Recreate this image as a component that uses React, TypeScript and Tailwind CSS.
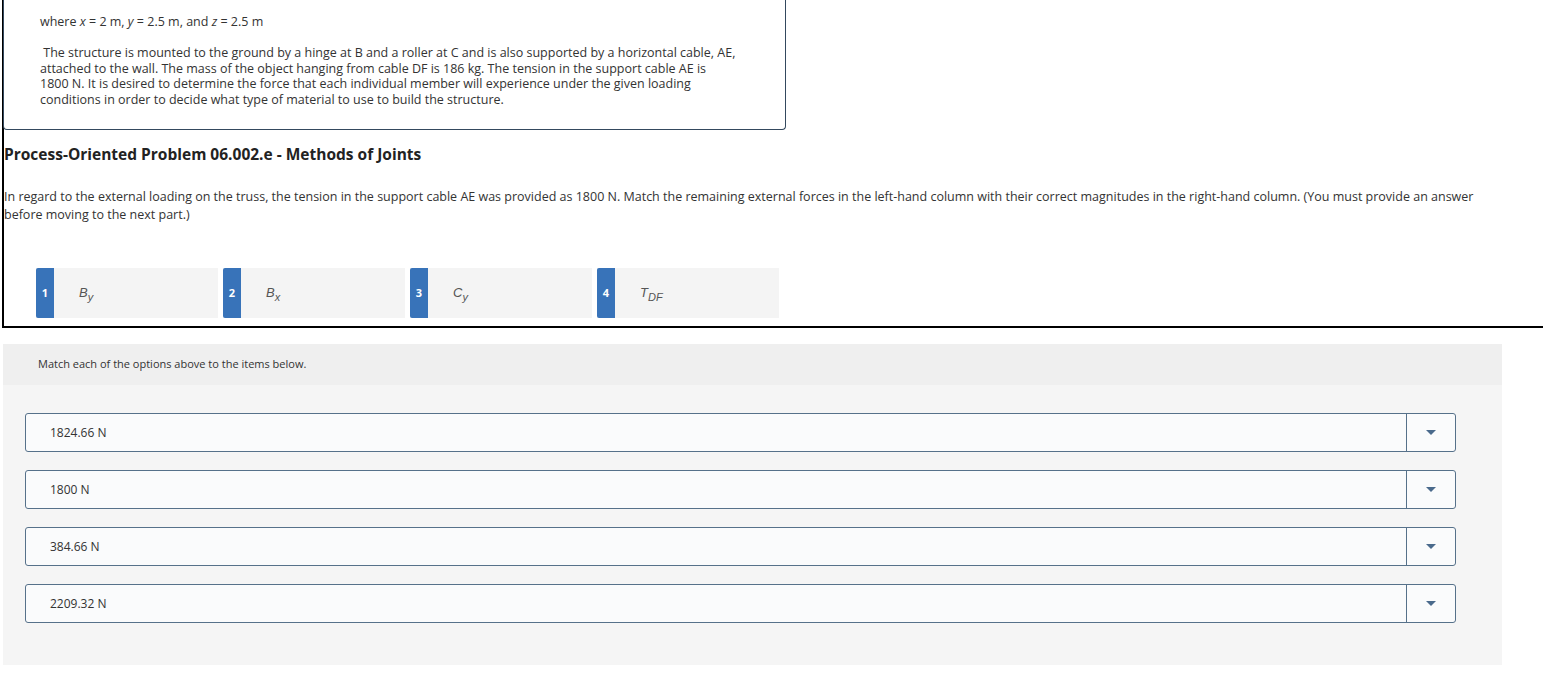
import React from "react";

const tiles = [
  { n: "1", base: "B", sub: "y" },
  { n: "2", base: "B", sub: "x" },
  { n: "3", base: "C", sub: "y" },
  { n: "4", base: "T", sub: "DF" },
];

const answers = ["1824.66 N", "1800 N", "384.66 N", "2209.32 N"];

function Caret() {
  return (
    <svg width="10" height="6" viewBox="0 0 10 6">
      <path d="M0 0 L10 0 L5 5 Z" fill="#4a6a8c" />
    </svg>
  );
}

export default function App() {
  return (
    <div
      className="w-[1543px] h-[690px] bg-white overflow-hidden text-[#333]"
      style={{ fontFamily: "'Open Sans', Lato, Arial, sans-serif" }}
    >
      <div className="ml-[2px] border-l-2 border-b-2 border-black">
        <div className="-ml-[1px] w-[783px] h-[130px] border border-t-0 border-[#34495e] rounded-b-[4px] pl-[36px] pt-[14px] text-[12.5px]">
          <p className="leading-[16px]">
            where <i>x</i> = 2 m, <i>y</i> = 2.5 m, and <i>z</i> = 2.5 m
          </p>
          <p className="mt-[15px] leading-[15.5px] w-[740px] whitespace-nowrap">
            &nbsp;The structure is mounted to the ground by a hinge at B and a roller at C and is also supported by a horizontal cable, AE,
            <br />
            attached to the wall. The mass of the object hanging from cable DF is 186 kg. The tension in the support cable AE is
            <br />
            1800 N. It is desired to determine the force that each individual member will experience under the given loading
            <br />
            conditions in order to decide what type of material to use to build the structure.
          </p>
        </div>
        <h2 className="mt-[14px] text-[15.5px] font-bold text-[#222] leading-[20px]">
          Process-Oriented Problem 06.002.e - Methods of Joints
        </h2>
        <p className="mt-[24px] text-[12.5px] leading-[18px] w-[1485px]">
          In regard to the external loading on the truss, the tension in the support cable AE was provided as 1800 N. Match the remaining external forces in the left-hand column with their correct magnitudes in the right-hand column. (You must provide an answer before moving to the next part.)
        </p>
        <div className="mt-[44px] mb-[8px] ml-[32px] flex gap-[5px]">
          {tiles.map((t) => (
            <div key={t.n} className="w-[182px] h-[50px] flex bg-[#f4f4f4]">
              <div className="w-[18px] h-full bg-[#3873b9] rounded-l-[2px] flex items-center justify-center text-white text-[11px] font-bold">
                {t.n}
              </div>
              <div
                className="pl-[25px] flex items-center text-[13px] italic text-[#555]"
                style={{ fontFamily: "'Liberation Sans', Arial, sans-serif" }}
              >
                <span>{t.base}</span>
                <span className="text-[11px] relative top-[4px]">{t.sub}</span>
              </div>
            </div>
          ))}
        </div>
      </div>

      <div className="mt-[16px] ml-[3px] w-[1499px] h-[321px] bg-[#f5f5f5]">
        <div className="h-[41px] bg-[#efefef] flex items-center pl-[35px] text-[11px] text-[#333]">
          Match each of the options above to the items below.
        </div>
        <div className="pt-[28px] pl-[22px] flex flex-col gap-[18px]">
          {answers.map((a) => (
            <div
              key={a}
              className="w-[1431px] h-[39px] flex border border-[#56718a] rounded-[3px] bg-[#fafbfc]"
            >
              <div className="flex-1 flex items-center pl-[24px] text-[12px] text-[#333]">
                {a}
              </div>
              <div className="w-[49px] border-l border-[#56718a] flex items-center justify-center">
                <Caret />
              </div>
            </div>
          ))}
        </div>
      </div>
    </div>
  );
}
